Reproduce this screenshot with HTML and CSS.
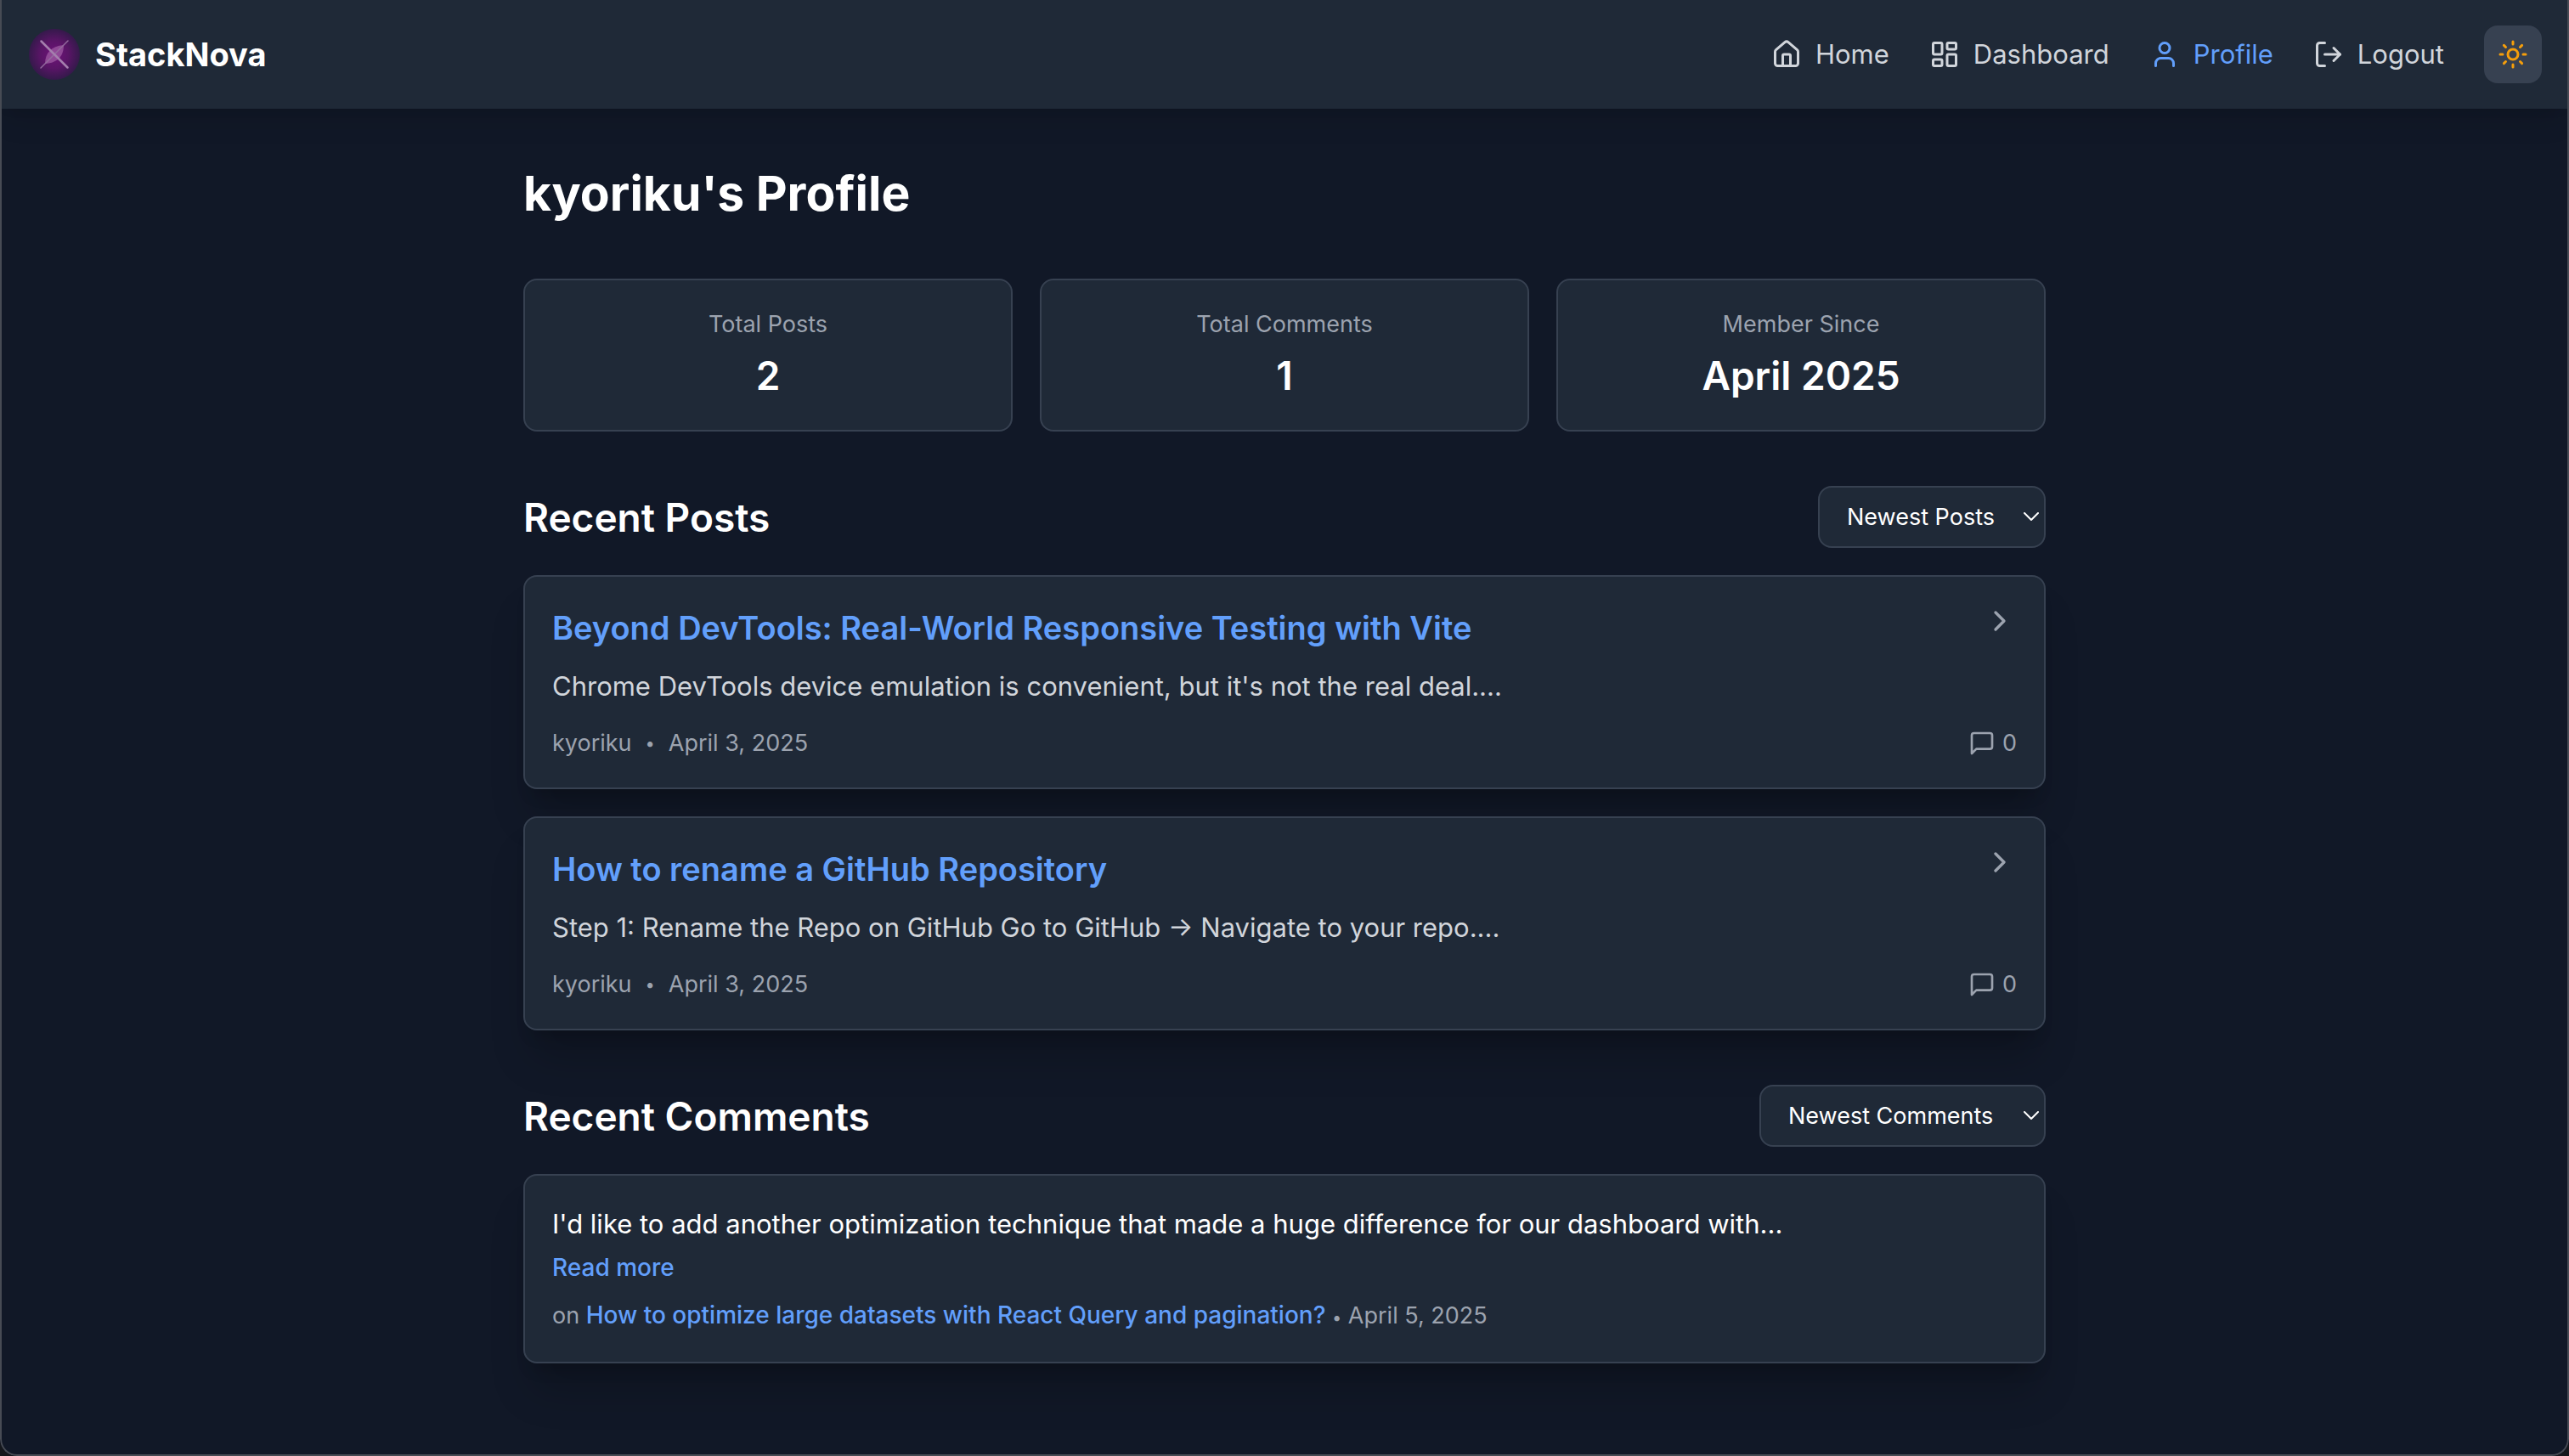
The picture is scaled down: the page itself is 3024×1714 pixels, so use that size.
FILE: index.html
```html
<!DOCTYPE html>
<html lang="en">
<head>
<meta charset="utf-8">
<meta name="viewport" content="width=device-width, initial-scale=1">
<title>StackNova - Profile</title>
<link rel="stylesheet" href="styles.css">
</head>
<body>
<div class="app">
  <header class="header">
    <a class="brand" href="#">
      <svg class="brand-logo" viewBox="0 0 60 60" aria-hidden="true">
        <defs>
          <radialGradient id="glow">
            <stop offset="0" stop-color="#6e1279"/>
            <stop offset="0.55" stop-color="#591566"/>
            <stop offset="1" stop-color="#35194b"/>
          </radialGradient>
        </defs>
        <circle cx="30" cy="30" r="30" fill="url(#glow)"/>
        <path d="M41 19C41 31 35 40 19 41C19 29 26 20 41 19Z" fill="#a765ab" fill-opacity="0.65"/>
        <path d="M14 46L46 14" stroke="#936a9e" stroke-width="1.5" stroke-linecap="round"/>
        <path d="M14.500 14.500L45.500 45.500" stroke="#a57fae" stroke-width="2.500" stroke-linecap="round"/>
      </svg>
      <span>StackNova</span>
    </a>
    <nav class="nav">
      <a class="nav-link" href="#">
        <svg class="icon" viewBox="0 0 24 24" aria-hidden="true"><path d="M15 21v-8a1 1 0 0 0-1-1h-4a1 1 0 0 0-1 1v8"/><path d="M3 10a2 2 0 0 1 .709-1.528l7-5.999a2 2 0 0 1 2.582 0l7 5.999A2 2 0 0 1 21 10v9a2 2 0 0 1-2 2H5a2 2 0 0 1-2-2z"/></svg>
        Home
      </a>
      <a class="nav-link" href="#">
        <svg class="icon" viewBox="0 0 24 24" aria-hidden="true"><rect x="3" y="3" width="7" height="9" rx="1"/><rect x="14" y="3" width="7" height="5" rx="1"/><rect x="14" y="12" width="7" height="9" rx="1"/><rect x="3" y="16" width="7" height="5" rx="1"/></svg>
        Dashboard
      </a>
      <a class="nav-link nav-link-active" href="#" aria-current="page">
        <svg class="icon" viewBox="0 0 24 24" aria-hidden="true"><path d="M19 21v-2a4 4 0 0 0-4-4H9a4 4 0 0 0-4 4v2"/><circle cx="12" cy="7" r="4"/></svg>
        Profile
      </a>
      <button class="nav-link" type="button">
        <svg class="icon" viewBox="0 0 24 24" aria-hidden="true"><path d="M9 21H5a2 2 0 0 1-2-2V5a2 2 0 0 1 2-2h4"/><path d="M16 17l5-5-5-5"/><path d="M21 12H9"/></svg>
        Logout
      </button>
      <button class="theme-toggle" type="button" aria-label="Switch to light theme">
        <svg class="icon" viewBox="0 0 24 24" aria-hidden="true"><circle cx="12" cy="12" r="4"/><path d="M12 2v2M12 20v2M4.930 4.930l1.410 1.410M17.660 17.660l1.410 1.410M2 12h2M20 12h2M6.340 17.660l-1.410 1.410M19.070 4.930l-1.410 1.410"/></svg>
      </button>
    </nav>
  </header>

  <main class="main">
    <h1 class="page-title">kyoriku's Profile</h1>

    <dl class="stats">
      <div class="card stat"><dt class="stat-label">Total Posts</dt><dd class="stat-value">2</dd></div>
      <div class="card stat"><dt class="stat-label">Total Comments</dt><dd class="stat-value">1</dd></div>
      <div class="card stat"><dt class="stat-label">Member Since</dt><dd class="stat-value">April 2025</dd></div>
    </dl>

    <section class="section">
      <div class="section-head">
        <h2 class="section-title">Recent Posts</h2>
        <div class="picker">
          <select class="select select-posts" aria-label="Sort posts">
            <option>Newest Posts</option>
            <option>Oldest Posts</option>
          </select>
          <svg class="picker-arrow" viewBox="0 0 18 10" aria-hidden="true"><path d="M1 1l8 8 8-8"/></svg>
        </div>
      </div>
      <article class="card entry">
        <div class="entry-top">
          <h3 class="entry-title"><a href="#">Beyond DevTools: Real-World Responsive Testing with Vite</a></h3>
          <svg class="icon-large" viewBox="0 0 24 24" aria-hidden="true"><path d="M9 18l6-6-6-6"/></svg>
        </div>
        <p class="entry-text">Chrome DevTools device emulation is convenient, but it's not the real deal....</p>
        <div class="meta">
          <span>kyoriku</span><span class="dot">•</span><span>April 3, 2025</span>
          <span class="replies">
            <svg class="icon-small" viewBox="0 0 24 24" aria-hidden="true"><path d="M21 15a2 2 0 0 1-2 2H7l-4 4V5a2 2 0 0 1 2-2h14a2 2 0 0 1 2 2z"/></svg>
            0
          </span>
        </div>
      </article>
      <article class="card entry">
        <div class="entry-top">
          <h3 class="entry-title"><a href="#">How to rename a GitHub Repository</a></h3>
          <svg class="icon-large" viewBox="0 0 24 24" aria-hidden="true"><path d="M9 18l6-6-6-6"/></svg>
        </div>
        <p class="entry-text">Step 1: Rename the Repo on GitHub Go to GitHub → Navigate to your repo....</p>
        <div class="meta">
          <span>kyoriku</span><span class="dot">•</span><span>April 3, 2025</span>
          <span class="replies">
            <svg class="icon-small" viewBox="0 0 24 24" aria-hidden="true"><path d="M21 15a2 2 0 0 1-2 2H7l-4 4V5a2 2 0 0 1 2-2h14a2 2 0 0 1 2 2z"/></svg>
            0
          </span>
        </div>
      </article>
    </section>

    <section class="section">
      <div class="section-head">
        <h2 class="section-title">Recent Comments</h2>
        <div class="picker">
          <select class="select select-comments" aria-label="Sort comments">
            <option>Newest Comments</option>
            <option>Oldest Comments</option>
          </select>
          <svg class="picker-arrow" viewBox="0 0 18 10" aria-hidden="true"><path d="M1 1l8 8 8-8"/></svg>
        </div>
      </div>
      <article class="card entry">
        <p class="comment-text">I'd like to add another optimization technique that made a huge difference for our dashboard with...</p>
        <button class="read-more" type="button">Read more</button>
        <p class="comment-meta">on <a href="#">How to optimize large datasets with React Query and pagination?</a> <span class="dot">•</span> April 5, 2025</p>
      </article>
    </section>
  </main>
</div>
</body>
</html>
```
FILE: styles.css
```css
*,
*::before,
*::after {
  box-sizing: border-box;
}

html {
  background: #15171c;
}

body {
  margin: 0;
  font-family: Inter, "Liberation Sans", sans-serif;
  font-size: 31px;
  line-height: 50px;
  color: #fff;
}

h1, h2, h3, p, dl, dd {
  margin: 0;
}

a {
  color: inherit;
  text-decoration: none;
}

button {
  padding: 0;
  border: 0;
  background: none;
  color: inherit;
  font: inherit;
  cursor: pointer;
}

.app {
  position: relative;
  min-height: 100vh;
  background: #111827;
  border-radius: 0 0 20px 20px;
  overflow: hidden;
}

/* hairline window frame, drawn over the page edges */
.app::after {
  content: "";
  position: absolute;
  inset: 0;
  border: solid #474b54;
  border-width: 0 2px 2px;
  border-radius: 0 0 20px 20px;
  pointer-events: none;
}

.header {
  display: flex;
  align-items: center;
  justify-content: space-between;
  height: 128px;
  padding: 0 32px 0 34px;
  background: #1f2937;
  box-shadow: 0 20px 30px -6px rgb(0 0 0 / 0.1), 0 8px 12px -8px rgb(0 0 0 / 0.1);
}

.brand {
  display: flex;
  align-items: center;
  gap: 18px;
  font-size: 38px;
  font-weight: 700;
}

.brand-logo {
  width: 60px;
  height: 60px;
}

.nav {
  display: flex;
  align-items: center;
  gap: 47px;
}

.nav-link {
  display: flex;
  align-items: center;
  gap: 16px;
  color: #d1d5db;
}

.nav-link-active {
  color: #629ffb;
}

.icon,
.icon-small,
.icon-large,
.picker-arrow {
  flex: none;
  fill: none;
  stroke: currentColor;
  stroke-width: 2;
  stroke-linecap: round;
  stroke-linejoin: round;
}

.icon {
  width: 36px;
  height: 36px;
}

.icon-small {
  width: 32px;
  height: 32px;
}

.icon-large {
  width: 40px;
  height: 40px;
  color: #9ca3af;
}

.theme-toggle {
  display: grid;
  place-items: center;
  width: 68px;
  height: 68px;
  border-radius: 16px;
  background: #374151;
  color: #f59e0b;
}

.main {
  max-width: 1856px;
  margin: 0 auto;
  padding: 64px 32px 108px;
}

.page-title {
  margin-bottom: 64px;
  font-size: 57px;
  line-height: 72px;
  font-weight: 700;
}

.card {
  border: 2px solid #374151;
  border-radius: 16px;
  background: #1f2937;
}

.stats {
  display: grid;
  grid-template-columns: repeat(3, 1fr);
  gap: 32px;
}

.stat {
  padding: 32px;
  text-align: center;
}

.stat-label {
  font-size: 27px;
  line-height: 40px;
  color: #9ca3af;
}

.stat-value {
  margin-top: 8px;
  font-size: 46px;
  line-height: 64px;
  font-weight: 600;
}

.section {
  display: grid;
  gap: 32px;
  margin-top: 64px;
}

.section-head {
  display: flex;
  align-items: center;
  justify-content: space-between;
}

.section-title {
  font-size: 46px;
  line-height: 64px;
  font-weight: 600;
}

.picker {
  position: relative;
}

.select {
  appearance: none;
  display: block;
  height: 73px;
  padding: 0 32px;
  border: 2px solid #374151;
  border-radius: 16px;
  background: #1f2937;
  color: #fff;
  font: inherit;
  font-size: 27px;
}

.select-posts {
  width: 268px;
}

.select-comments {
  width: 337px;
}

.picker-arrow {
  position: absolute;
  top: 31px;
  right: 8px;
  width: 18px;
  height: 10px;
  pointer-events: none;
}

.entry {
  padding: 32px;
  box-shadow: 0 40px 50px -10px rgb(0 0 0 / 0.2), 0 16px 20px -12px rgb(0 0 0 / 0.2);
}

.entry-top {
  display: flex;
  align-items: flex-start;
  justify-content: space-between;
}

.entry-title {
  font-size: 38px;
  line-height: 56px;
  font-weight: 600;
  color: #629ffb;
}

.entry-text {
  margin-top: 16px;
  color: #d1d5db;
}

.meta {
  display: flex;
  align-items: center;
  gap: 16px;
  margin-top: 22px;
  font-size: 27px;
  line-height: 40px;
  color: #9ca3af;
}

.dot {
  font-size: 20px;
}

.replies {
  display: flex;
  align-items: center;
  gap: 8px;
  margin-left: auto;
}

.read-more {
  display: block;
  margin-top: 6px;
  font-size: 28px;
  line-height: 40px;
  font-weight: 500;
  color: #629ffb;
}

.comment-meta {
  margin-top: 16px;
  font-size: 27px;
  line-height: 40px;
  color: #9ca3af;
}

.comment-meta a {
  font-size: 28px;
  font-weight: 500;
  color: #629ffb;
}
```
